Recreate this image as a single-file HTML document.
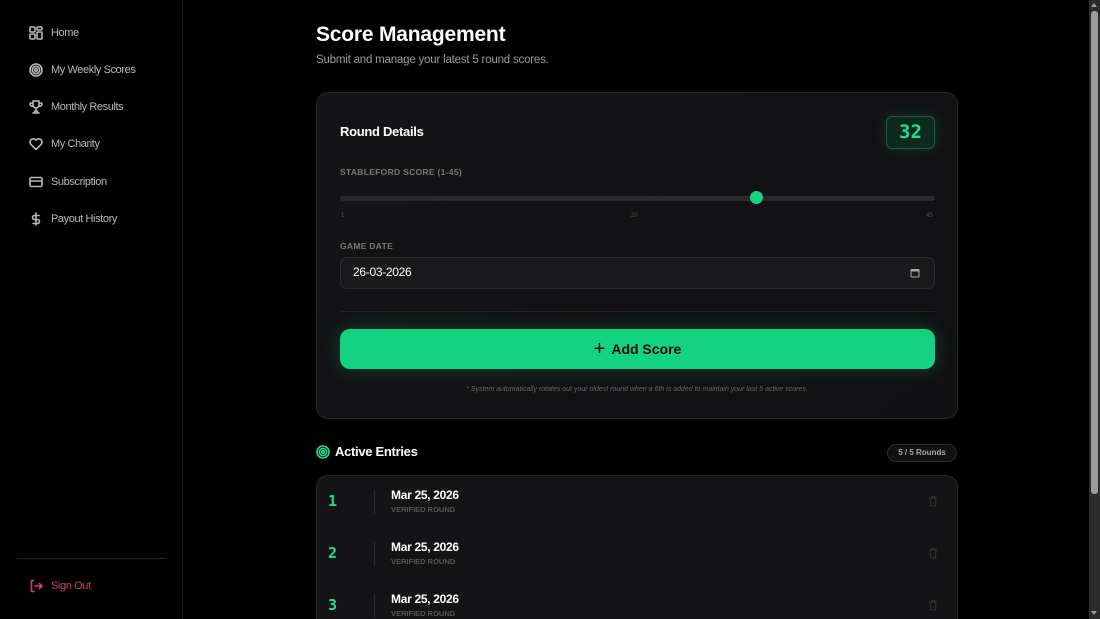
<!DOCTYPE html>
<html style="overflow:hidden;width:1100px;height:619px"><head><style>
*{box-sizing:border-box;margin:0;padding:0}
body{width:1100px;height:619px;background:#000;font-family:"Liberation Sans",sans-serif;overflow:hidden;position:relative;color:#fff}
.side{position:absolute;left:0;top:0;width:183px;height:619px;border-right:1px solid #1c1c1c}
.nav{position:absolute;left:29px;display:flex;align-items:center;font-size:11px;color:#b8b8b8;letter-spacing:-0.4px}
.nav svg{width:14px;height:14px;margin-right:8px;fill:none;stroke:#b8b8b8;stroke-width:1.6;stroke-linecap:round;stroke-linejoin:round}
.sep{position:absolute;left:17px;width:149px;top:558px;border-top:1px solid #222}
h1{position:absolute;left:316px;top:23px;font-size:21px;font-weight:bold;letter-spacing:-0.2px}
.sub{position:absolute;left:316px;top:54px;font-size:11.5px;color:#9a9a9a;letter-spacing:-0.2px}
.card{position:absolute;left:316px;top:92px;width:642px;height:327px;border:1px solid #262626;border-radius:12px;background:linear-gradient(135deg,#141416,#111113)}
.lbl{position:absolute;font-size:8.5px;font-weight:bold;color:#777;letter-spacing:.3px}
.score{position:absolute;left:569px;top:23px;width:49px;height:33px;border:1px solid #1e5c40;border-radius:6px;background:#0d2a1e;color:#19e08a;font:bold 19px "DejaVu Sans Mono",monospace;text-align:center;line-height:31px;box-shadow:0 0 12px rgba(20,210,130,.2)}
.track{position:absolute;left:23px;top:103px;width:595px;height:5px;border-radius:3px;background:#2a2a2c}
.thumb{position:absolute;left:433px;top:98px;width:13px;height:13px;border-radius:50%;background:#16d484}
.tick{position:absolute;top:120px;font-size:6px;color:#555}
.date{position:absolute;left:23px;top:164px;width:595px;height:32px;border:1px solid #2c2c2e;border-radius:7px;background:#1a1a1c;font-size:12px;padding:7px 12px;letter-spacing:-.3px}
.btn{position:absolute;left:23px;top:236px;width:595px;height:40px;border-radius:10px;background:#13d283;color:#0a0a0a;font-size:14px;font-weight:bold;text-align:center;line-height:40px;box-shadow:0 0 18px rgba(19,210,131,.25)}
.note{position:absolute;left:0;width:100%;top:293px;text-align:center;font-size:7px;font-style:italic;color:#666}
.list{position:absolute;left:316px;top:475px;width:642px;height:144px;border:1px solid #262626;border-bottom:none;border-radius:12px 12px 0 0;background:#141416}
.row{position:absolute;left:0;width:100%;height:50px}
.num{position:absolute;left:11px;top:16px;font:bold 15px "DejaVu Sans Mono",monospace;color:#19e08a}
.vl{position:absolute;left:57px;top:14px;height:24px;border-left:1px solid #2a2a2a}
.dt{position:absolute;left:74px;top:12px;font-size:12px;font-weight:bold;letter-spacing:-.3px}
.vr{position:absolute;left:74px;top:29px;font-size:7.5px;font-weight:bold;color:#555}
.trash{position:absolute;left:611px;top:19px}
</style></head><body>
<div class="side">
<div class="nav" style="top:26px"><svg viewBox="0 0 14 14"><rect x="1" y="1" width="5" height="5" rx="1"/><rect x="8" y="1" width="5" height="3" rx="1"/><rect x="1" y="8" width="5" height="5" rx="1"/><rect x="8" y="6" width="5" height="7" rx="1"/></svg>Home</div>
<div class="nav" style="top:63px"><svg viewBox="0 0 14 14"><circle cx="7" cy="7" r="6"/><circle cx="7" cy="7" r="3.7"/><circle cx="7" cy="7" r="1.4"/></svg>My Weekly Scores</div>
<div class="nav" style="top:100px"><svg viewBox="0 0 14 14"><path d="M4 1h6v4a3 3 0 0 1-6 0z M4 3H1.5a2 2 0 0 0 2.5 3 M10 3h2.5a2 2 0 0 1-2.5 3 M7 8v3 M4 13h6 M5 13l1-2h2l1 2"/></svg>Monthly Results</div>
<div class="nav" style="top:137px"><svg viewBox="0 0 14 14"><path d="M7 12.5L1.8 7.3A3.2 3.2 0 0 1 7 3a3.2 3.2 0 0 1 5.2 4.3z"/></svg>My Charity</div>
<div class="nav" style="top:175px"><svg viewBox="0 0 14 14"><rect x="1" y="2.5" width="12" height="9" rx="1.3"/><path d="M1 6h12"/></svg>Subscription</div>
<div class="nav" style="top:212px"><svg viewBox="0 0 14 14"><path d="M7 1v12 M10 3.5H5.5a2 2 0 0 0 0 4h3a2 2 0 0 1 0 4H4"/></svg>Payout History</div>
<div class="sep"></div>
<div class="nav" style="top:579px;color:#d23a6c"><svg viewBox="0 0 14 14" style="stroke:#d23a6c"><path d="M5 1.5H2.5v11H5 M6 7h7 M10.5 4.5L13 7l-2.5 2.5"/></svg>Sign Out</div>
</div>
<h1>Score Management</h1>
<div class="sub">Submit and manage your latest 5 round scores.</div>
<div class="card">
<div style="position:absolute;left:23px;top:31px;font-size:13px;font-weight:bold;letter-spacing:-.3px">Round Details</div>
<div class="score">32</div>
<div class="lbl" style="left:23px;top:74px">STABLEFORD SCORE (1-45)</div>
<div class="track"></div><div class="thumb"></div>
<div class="tick" style="left:24px">1</div><div class="tick" style="left:314px">20</div><div class="tick" style="left:609px">45</div>
<div class="lbl" style="left:23px;top:148px">GAME DATE</div>
<div class="date">26-03-2026<svg style="position:absolute;right:14px;top:10px" width="10" height="10" viewBox="0 0 10 10"><rect x="1" y="1.5" width="8" height="7.5" rx="1" fill="none" stroke="#aaa" stroke-width="1"/><rect x="1" y="1.5" width="8" height="2" fill="#aaa"/></svg></div>
<div style="position:absolute;left:23px;top:218px;width:595px;border-top:1px solid #222"></div>
<div class="btn"><span style="font-weight:normal;font-size:20px;vertical-align:-1px;margin-right:6px">+</span>Add Score</div>
<div class="note">* System automatically rotates out your oldest round when a 6th is added to maintain your last 5 active scores.</div>
</div>
<svg style="position:absolute;left:316px;top:445px" width="14" height="14" viewBox="0 0 14 14" fill="none" stroke="#19e08a" stroke-width="1.6"><circle cx="7" cy="7" r="6"/><circle cx="7" cy="7" r="3.6"/><circle cx="7" cy="7" r="1.3"/></svg>
<div style="position:absolute;left:335px;top:444px;font-size:13px;font-weight:bold;letter-spacing:-.3px">Active Entries</div>
<div style="position:absolute;left:887px;top:444px;width:70px;height:18px;border:1px solid #2a2a2a;border-radius:9px;background:#111;font-size:8px;font-weight:bold;color:#aaa;text-align:center;line-height:16px">5 / 5 Rounds</div>
<div class="list">
<div class="row" style="top:0"><div class="num">1</div><div class="vl"></div><div class="dt">Mar 25, 2026</div><div class="vr">VERIFIED ROUND</div><svg class="trash" width="10" height="12" viewBox="0 0 10 12" fill="none" stroke="#333" stroke-width="1"><path d="M1 3h8 M3.5 3V1.5h3V3 M2 3l.5 8h5L8 3"/></svg></div>
<div class="row" style="top:52px"><div class="num">2</div><div class="vl"></div><div class="dt">Mar 25, 2026</div><div class="vr">VERIFIED ROUND</div><svg class="trash" width="10" height="12" viewBox="0 0 10 12" fill="none" stroke="#333" stroke-width="1"><path d="M1 3h8 M3.5 3V1.5h3V3 M2 3l.5 8h5L8 3"/></svg></div>
<div class="row" style="top:104px;height:40px;overflow:hidden"><div class="num">3</div><div class="vl"></div><div class="dt">Mar 25, 2026</div><div class="vr">VERIFIED ROUND</div><svg class="trash" width="10" height="12" viewBox="0 0 10 12" fill="none" stroke="#333" stroke-width="1"><path d="M1 3h8 M3.5 3V1.5h3V3 M2 3l.5 8h5L8 3"/></svg></div>
</div>
<div style="position:absolute;left:1089px;top:0;width:11px;height:619px;background:#2b2b2b"></div>
<div style="position:absolute;left:1091px;top:11px;width:7px;height:483px;border-radius:3px;background:#9d9d9d"></div>
<div style="position:absolute;left:1091px;top:3px;width:0;height:0;border:3.5px solid transparent;border-bottom:4px solid #9d9d9d;border-top:0"></div>
<div style="position:absolute;left:1091px;top:611px;width:0;height:0;border:3.5px solid transparent;border-top:4px solid #9d9d9d;border-bottom:0"></div>
</body></html>
